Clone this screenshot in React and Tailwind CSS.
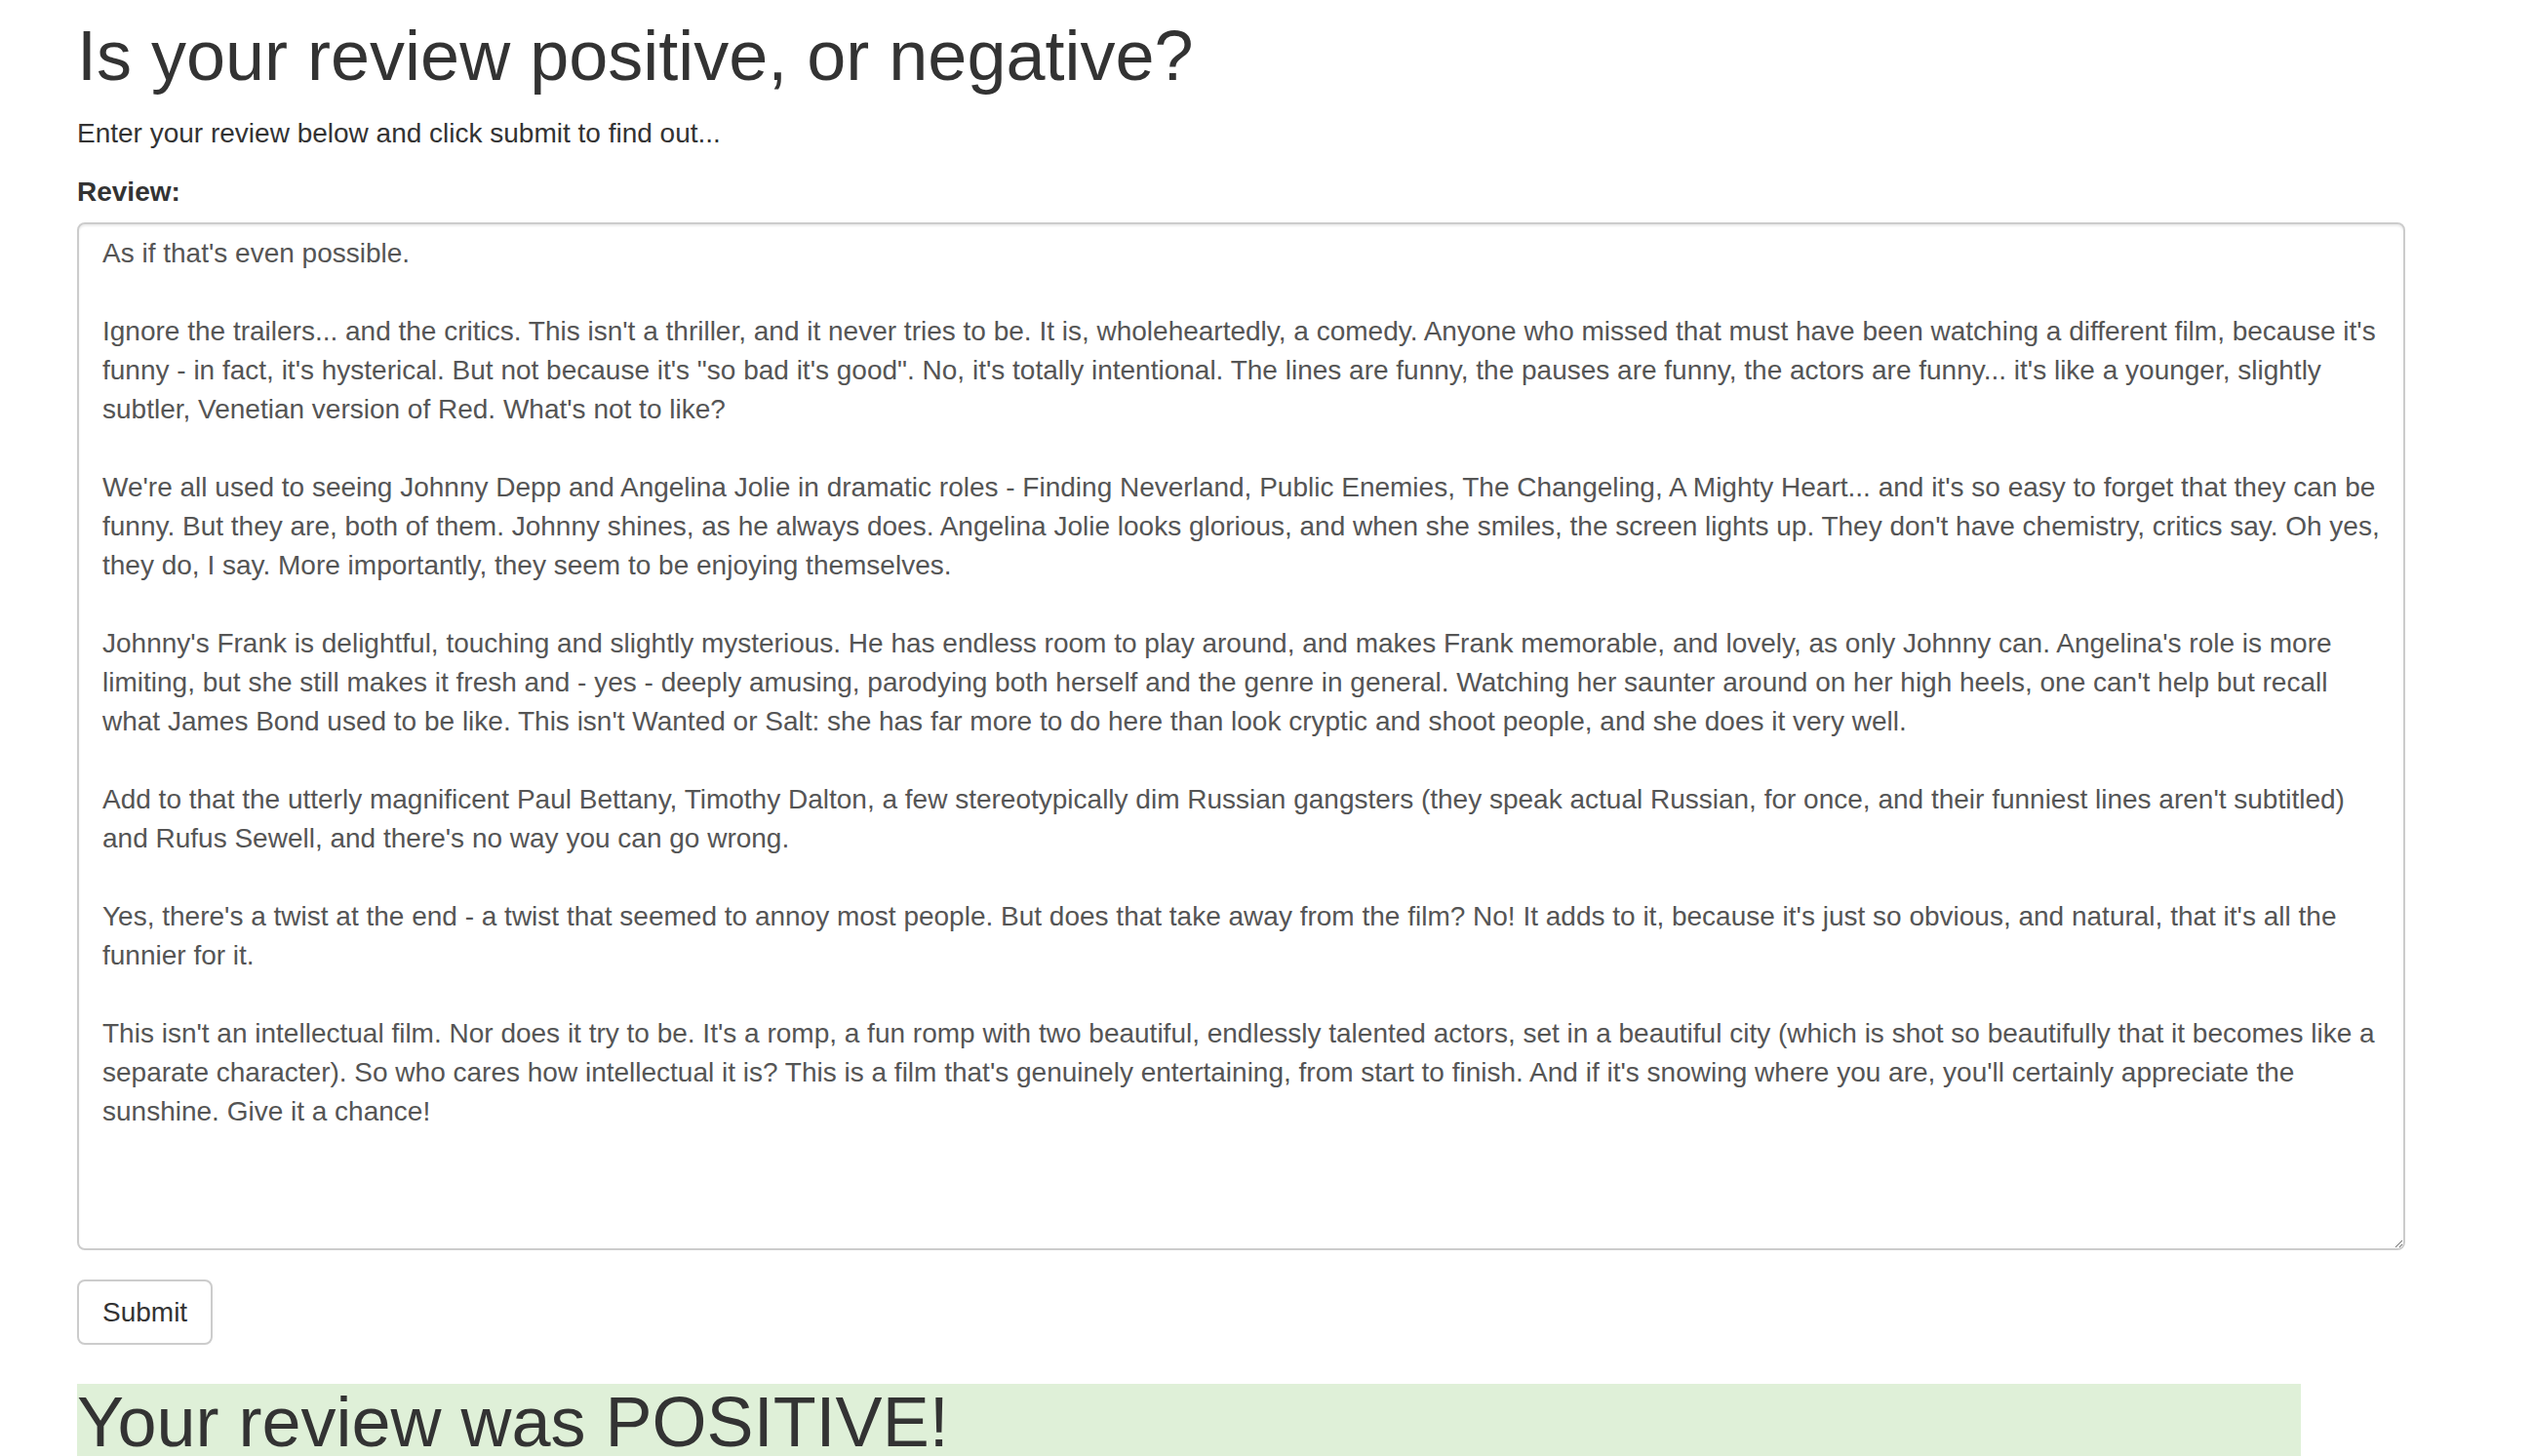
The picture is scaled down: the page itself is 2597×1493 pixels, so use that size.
import React from "react";

const review = `As if that's even possible.

Ignore the trailers... and the critics. This isn't a thriller, and it never tries to be. It is, wholeheartedly, a comedy. Anyone who missed that must have been watching a different film, because it's funny - in fact, it's hysterical. But not because it's "so bad it's good". No, it's totally intentional. The lines are funny, the pauses are funny, the actors are funny... it's like a younger, slightly subtler, Venetian version of Red. What's not to like?

We're all used to seeing Johnny Depp and Angelina Jolie in dramatic roles - Finding Neverland, Public Enemies, The Changeling, A Mighty Heart... and it's so easy to forget that they can be funny. But they are, both of them. Johnny shines, as he always does. Angelina Jolie looks glorious, and when she smiles, the screen lights up. They don't have chemistry, critics say. Oh yes, they do, I say. More importantly, they seem to be enjoying themselves.

Johnny's Frank is delightful, touching and slightly mysterious. He has endless room to play around, and makes Frank memorable, and lovely, as only Johnny can. Angelina's role is more limiting, but she still makes it fresh and - yes - deeply amusing, parodying both herself and the genre in general. Watching her saunter around on her high heels, one can't help but recall what James Bond used to be like. This isn't Wanted or Salt: she has far more to do here than look cryptic and shoot people, and she does it very well.

Add to that the utterly magnificent Paul Bettany, Timothy Dalton, a few stereotypically dim Russian gangsters (they speak actual Russian, for once, and their funniest lines aren't subtitled) and Rufus Sewell, and there's no way you can go wrong.

Yes, there's a twist at the end - a twist that seemed to annoy most people. But does that take away from the film? No! It adds to it, because it's just so obvious, and natural, that it's all the funnier for it.

This isn't an intellectual film. Nor does it try to be. It's a romp, a fun romp with two beautiful, endlessly talented actors, set in a beautiful city (which is shot so beautifully that it becomes like a separate character). So who cares how intellectual it is? This is a film that's genuinely entertaining, from start to finish. And if it's snowing where you are, you'll certainly appreciate the sunshine. Give it a chance!`;

export default function App() {
  return (
    <div className="min-h-screen bg-white pl-[79px] pt-[18px] font-['Liberation_Sans',Arial,sans-serif] text-[28px] leading-[40px] text-[#333]">
      {/* Header */}
      <h1 className="mb-[20px] text-[72px] font-normal leading-[1.1]">
        Is your review positive, or negative?
      </h1>
      <p className="mb-[20px]">Enter your review below and click submit to find out...</p>

      {/* Form */}
      <form onSubmit={(e) => e.preventDefault()}>
        <label htmlFor="review" className="mb-[11px] block font-bold">
          Review:
        </label>
        <textarea
          id="review"
          defaultValue={review}
          className="block h-[1054px] w-[2387px] rounded-[8px] border-2 border-[#ccc] bg-white px-[24px] pb-[12px] pt-[10px] font-['Liberation_Sans',Arial,sans-serif] text-[28px] leading-[40px] text-[#555] shadow-[inset_0_2px_2px_rgba(0,0,0,0.075)] outline-none"
        />
        <button
          type="submit"
          className="mt-[30px] rounded-[8px] border-2 border-[#ccc] bg-white px-[24px] py-[12px] text-[28px] leading-[39px] text-[#333]"
        >
          Submit
        </button>
      </form>

      {/* Result */}
      <h1 className="mt-[40px] w-[2280px] bg-[#dff0d8] text-[72px] font-normal leading-[1.1]">
        Your review was POSITIVE!
      </h1>
    </div>
  );
}
